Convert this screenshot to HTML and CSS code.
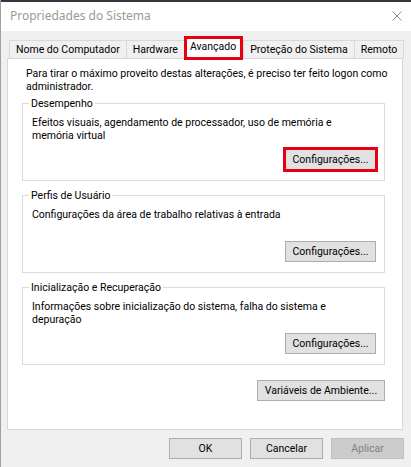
FILE: index.html
```html
<!DOCTYPE html>
<html lang="pt-BR">
<head>
<meta charset="utf-8">
<title>Propriedades do Sistema</title>
<link rel="stylesheet" href="styles.css">
</head>
<body>
<div class="window">
  <div class="strip"></div>
  <div class="titlebar">
    <span class="title">Propriedades do Sistema</span>
    <svg class="close" width="10" height="10" viewBox="0 0 10 10"><path d="M0.5 0.5 L9.5 9.5 M9.5 0.5 L0.5 9.5" stroke="#8a8a8a" stroke-width="1" fill="none"/></svg>
  </div>
  <div class="main">
    <div class="tabs">
      <div class="tab">Nome do Computador</div>
      <div class="tab">Hardware</div>
      <div class="tab active">Avançado</div>
      <div class="tab">Proteção do Sistema</div>
      <div class="tab last">Remoto</div>
    </div>
    <div class="panel">
      <p class="intro">Para tirar o máximo proveito destas alterações, é preciso ter feito logon como<br>administrador.</p>
      <fieldset class="group">
        <legend>Desempenho</legend>
        <div class="group-body">
          <p class="desc">Efeitos visuais, agendamento de processador, uso de memória e<br>memória virtual</p>
          <button class="btn cfg highlight">Configurações...</button>
        </div>
      </fieldset>
      <fieldset class="group">
        <legend>Perfis de Usuário</legend>
        <div class="group-body">
          <p class="desc">Configurações da área de trabalho relativas à entrada</p>
          <button class="btn cfg">Configurações...</button>
        </div>
      </fieldset>
      <fieldset class="group">
        <legend>Inicialização e Recuperação</legend>
        <div class="group-body">
          <p class="desc">Informações sobre inicialização do sistema, falha do sistema e<br>depuração</p>
          <button class="btn cfg">Configurações...</button>
        </div>
      </fieldset>
      <div class="env-row">
        <button class="btn env">Variáveis de Ambiente...</button>
      </div>
    </div>
    <div class="footer">
      <button class="btn foot">OK</button>
      <button class="btn foot">Cancelar</button>
      <button class="btn foot disabled">Aplicar</button>
    </div>
  </div>
</div>
</body>
</html>
```
FILE: styles.css
```css
* { box-sizing: border-box; }
html, body { margin: 0; padding: 0; }
body {
  font-family: Roboto, "Liberation Sans", sans-serif;
  font-size: 10.5px;
  line-height: 13px;
  color: #000;
  background: #f0f0f0;
}
.window {
  width: 411px;
  height: 467px;
  display: flex;
  flex-direction: column;
  border-left: 1px solid #a0a0a0;
  background: #f0f0f0;
  overflow: hidden;
}
.strip { height: 2px; background: #3b3340; }
.titlebar {
  height: 29px;
  background: #fff;
  display: flex;
  align-items: center;
  justify-content: space-between;
  padding: 0 9px 2px 9px;
}
.title { color: #9a9a9a; font-family: "Noto Sans", sans-serif; font-size: 12px; line-height: 14px; }
.close { display: block; }
.main { flex: 1; display: flex; flex-direction: column; }
.tabs {
  display: flex;
  align-items: flex-end;
  padding-left: 8px;
  margin-top: 5px;
  position: relative;
  z-index: 1;
}
.tab {
  height: 18px;
  line-height: 17px;
  padding: 0 6px;
  border-top: 1px solid #d9d9d9;
  border-left: 1px solid #d9d9d9;
  background: #f0f0f0;
  white-space: nowrap;
}
.tab.last { border-right: 1px solid #d9d9d9; }
.tab.active {
  height: 24px;
  line-height: 22px;
  margin-bottom: -2px;
  border: none;
  background: #fff;
  box-shadow: inset 0 0 0 3px #e60012;
  padding: 0 7px 0 6px;
}
.tab.active + .tab { border-left: 1px solid #d9d9d9; }
.panel {
  height: 372px;
  margin: 0 8px 0 6px;
  background: #fff;
  border: 1px solid #d9d9d9;
  padding: 8px 17px 0 14px;
}
.intro { margin: 0 0 0 4px; white-space: nowrap; }
.group {
  margin: 8px 0 0 0;
  padding: 0;
  border: 1px solid #dcdcdc;
  min-width: 0;
}
.group:first-of-type { margin-top: 4px; }
.group legend {
  margin-left: 6px;
  padding: 0 2px;
  line-height: 13px;
}
.group-body {
  height: 70px;
  display: flex;
  flex-direction: column;
  align-items: flex-start;
  padding: 6px 8px 10px 9px;
}
.desc { margin: 0; white-space: nowrap; }
.btn {
  font: inherit;
  color: #000;
  background: #e1e1e1;
  border: 1px solid #adadad;
  height: 21px;
  padding: 0;
  line-height: 19px;
  text-align: center;
}
.cfg { width: 91px; margin-top: auto; align-self: flex-end; }
.highlight { outline: 3px solid #e60012; outline-offset: -1px; }
.env-row { display: flex; justify-content: flex-end; margin-top: 15px; }
.env { width: 128px; }
.footer {
  display: flex;
  justify-content: flex-end;
  gap: 8px;
  padding: 8px 7px 0 0;
}
.foot { width: 73px; }
.foot.disabled { background: #cccccc; border-color: #bfbfbf; color: #838383; }
```
